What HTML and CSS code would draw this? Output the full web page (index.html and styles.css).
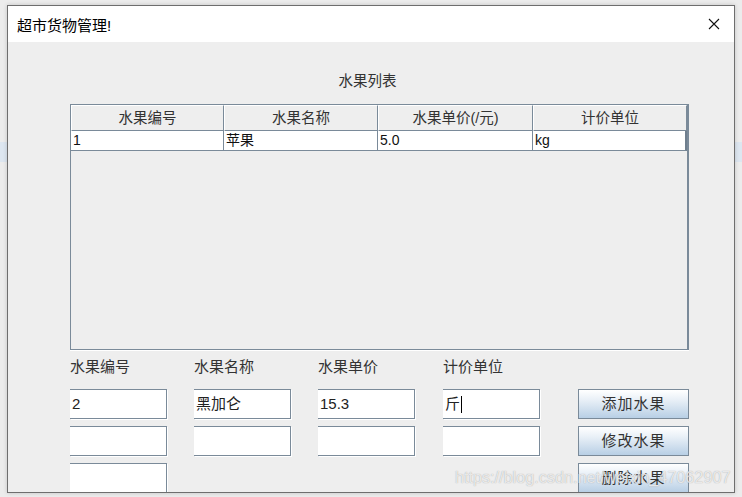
FILE: index.html
```html
<!DOCTYPE html>
<html lang="zh-CN">
<head>
<meta charset="utf-8">
<title>超市货物管理!</title>
<link rel="stylesheet" href="styles.css">
</head>
<body>
<div class="desktop">
  <div class="window">
    <div class="titlebar">
      <span class="title">超市货物管理!</span>
      <svg class="close" width="12" height="12" viewBox="0 0 12 12"><path d="M1 1 L11 11 M11 1 L1 11" stroke="#111" stroke-width="1.1" fill="none"/></svg>
    </div>
    <div class="content">
      <div class="list-title">水果列表</div>
      <div class="scroll">
        <div class="thead">
          <div class="th">水果编号</div>
          <div class="th">水果名称</div>
          <div class="th">水果单价(/元)</div>
          <div class="th">计价单位</div>
        </div>
        <div class="tr">
          <div class="td">1</div>
          <div class="td">苹果</div>
          <div class="td">5.0</div>
          <div class="td last">kg</div>
        </div>
      </div>
      <div class="form">
        <div class="label">水果编号</div>
        <div class="label">水果名称</div>
        <div class="label">水果单价</div>
        <div class="label">计价单位</div>
        <div></div>

        <div class="field">2</div>
        <div class="field">黑加仑</div>
        <div class="field">15.3</div>
        <div class="field">斤<span class="caret"></span></div>
        <div class="btn">添加水果</div>

        <div class="field"></div>
        <div class="field"></div>
        <div class="field"></div>
        <div class="field"></div>
        <div class="btn">修改水果</div>

        <div class="field"></div>
        <div></div>
        <div></div>
        <div></div>
        <div class="btn">删除水果</div>
      </div>
    </div>
  </div>
  <div class="watermark">https://blog.csdn.net/weixin_47062907</div>
</div>
</body>
</html>
```
FILE: styles.css
```css
html, body {
  margin: 0;
  padding: 0;
}
body {
  width: 742px;
  height: 497px;
  overflow: hidden;
  background: linear-gradient(to bottom, #ececec 0, #ececec 142px, #dde6f0 142px, #dde6f0 162px, #ececec 162px);
  font-family: "Liberation Sans", "Noto Sans CJK SC", sans-serif;
}
.desktop {
  position: relative;
  padding: 5px 0 0 7px;
  height: 492px;
}
.window {
  width: 726px;
  height: 486px;
  border: 1px solid #6e6e6e;
  background: #eeeeee;
  overflow: hidden;
  box-shadow: 0 0 4px rgba(0,0,0,0.18);
}
.titlebar {
  height: 36px;
  background: #ffffff;
  display: flex;
  align-items: center;
  justify-content: space-between;
  padding: 0 14px 0 9px;
}
.title {
  font-size: 15px;
  color: #000;
}
.close {
  display: block;
}
.content {
  padding: 29px 0 0 62px;
}
.list-title {
  width: 595px;
  text-align: center;
  font-size: 14.5px;
  line-height: 20px;
  color: #333;
  margin-bottom: 13px;
}
.scroll {
  width: 616px;
  height: 244px;
  border: 1px solid #7a8a99;
  border-right-width: 2px;
  box-shadow: 0 1px 0 #ffffff;
  background: #eeeeee;
}
.thead, .tr {
  display: grid;
  grid-template-columns: 153px 154px 155px 154px;
}
.th {
  height: 26px;
  box-sizing: border-box;
  border-left: 1px solid #ffffff;
  border-top: 1px solid #ffffff;
  border-right: 1px solid #7a8a99;
  border-bottom: 1px solid #7a8a99;
  font-size: 14.5px;
  color: #333;
  text-align: center;
  line-height: 25px;
}
.tr {
  background: #ffffff;
}
.td {
  height: 20px;
  box-sizing: border-box;
  border-right: 1px solid #7a8a99;
  border-bottom: 1px solid #7a8a99;
  font-size: 14px;
  line-height: 19px;
  padding-left: 2px;
  color: #111;
}
.td.last {
  border-right: 2px solid #6f7f8e;
}
.form {
  display: grid;
  grid-template-columns: 124px 124px 125px 135px 111px;
  grid-template-rows: 25px 30px 30px 30px;
  row-gap: 7px;
  margin-top: 7px;
}
.label {
  font-size: 15px;
  color: #333;
  line-height: 20px;
  height: 20px;
  align-self: start;
}
.field {
  width: 97px;
  height: 30px;
  box-sizing: border-box;
  background: #ffffff;
  border-top: 1px solid #7a8a99;
  border-right: 1px solid #7a8a99;
  border-bottom: 1px solid #7a8a99;
  box-shadow: 1px 1px 0 #ffffff;
  font-size: 15px;
  line-height: 28px;
  padding-left: 2px;
  color: #222;
  display: flex;
  align-items: center;
}
.caret {
  display: inline-block;
  width: 1px;
  height: 17px;
  background: #000;
  margin-left: 1px;
}
.btn {
  width: 111px;
  height: 30px;
  box-sizing: border-box;
  border: 1px solid #7a8a99;
  background: linear-gradient(to bottom, #ffffff 0%, #e9f0f7 35%, #b8cfe5 100%);
  font-size: 15px;
  color: #333;
  text-align: center;
  line-height: 28px;
  letter-spacing: 1px;
}
.watermark {
  position: absolute;
  left: 455px;
  top: 468px;
  font-size: 16.2px;
  color: rgba(255,255,255,0.75);
  text-shadow: 0 0 1px rgba(120,120,120,0.7);
  white-space: nowrap;
  font-family: "Liberation Sans", sans-serif;
}
```
